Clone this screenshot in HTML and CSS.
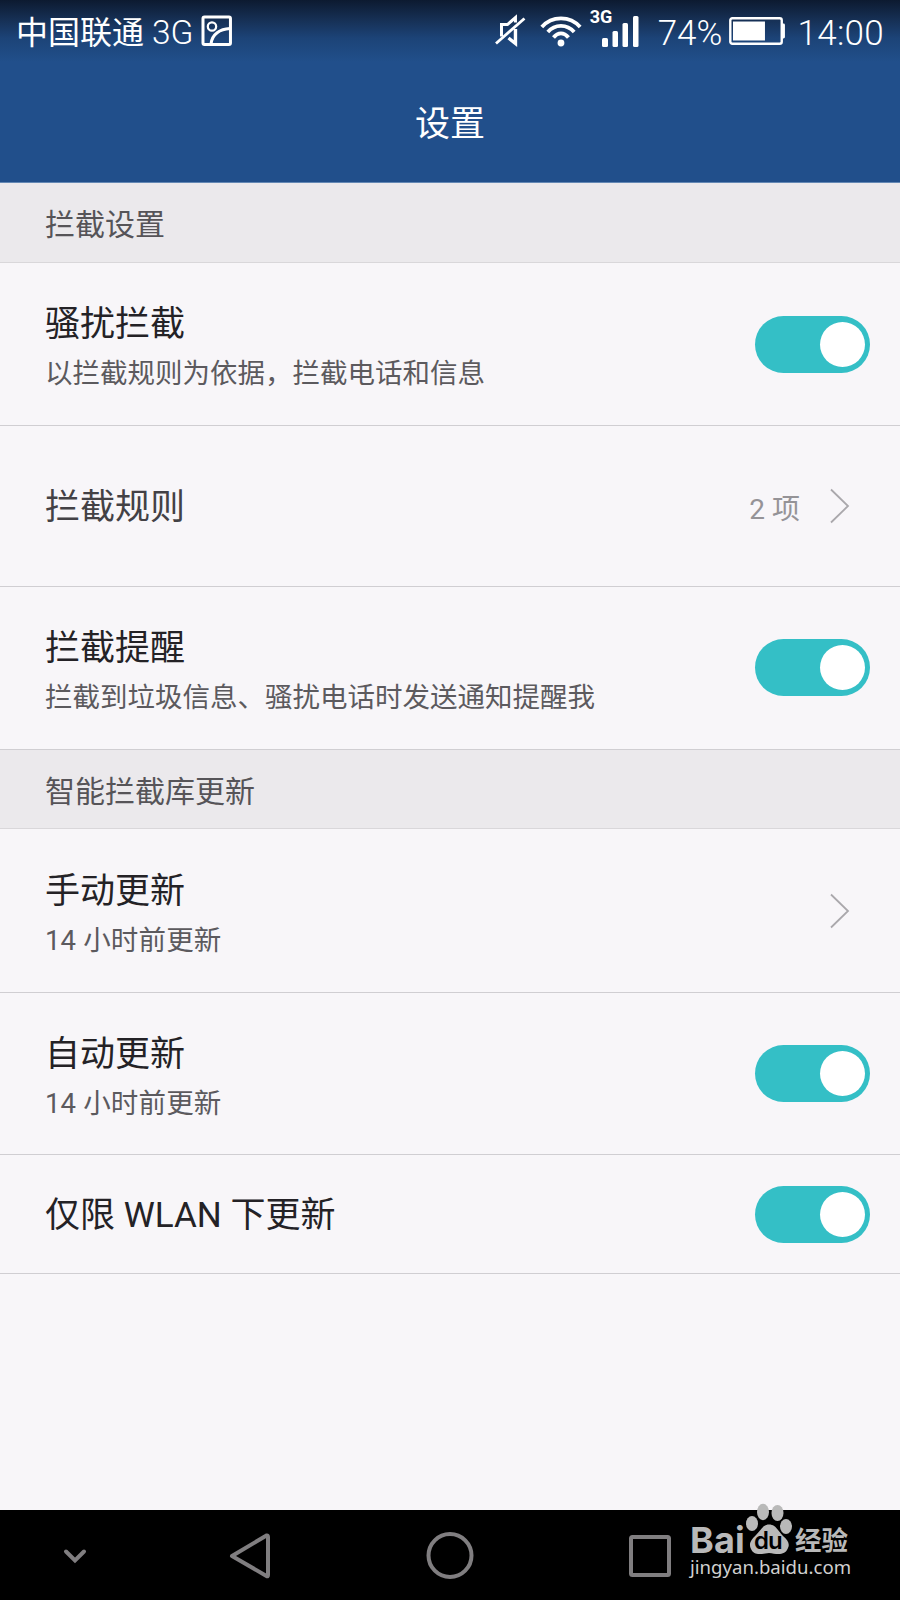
FILE: index.html
```
<!DOCTYPE html>
<html lang="zh-CN">
<head>
<meta charset="utf-8">
<title>设置</title>
<link rel="stylesheet" href="styles.css">
</head>
<body>
<div class="screen">
  <header class="header">
    <div class="status">
      <span class="carrier">中国联通 <span class="gen">3G</span></span>
      <svg class="picture" width="32" height="32" viewBox="0 0 32 32" fill="none" stroke="#fff"><rect x="2" y="2" width="27.5" height="27.5" rx="1.5" stroke-width="3"/><circle cx="11" cy="11.500" r="4.200" stroke-width="2.200"/><path d="M10 29C11 19 19 14 29 13.500" stroke-width="3"/></svg>
      <svg class="mute" width="32" height="34" viewBox="0 0 32 34" fill="none" stroke="#fff"><path d="M1 29.500L29.500 4.500" stroke-width="2.800"/><path d="M6.500 22.500V10.500H12.500L20.500 3.500V8.500" stroke-width="3"/><path d="M20.500 15V29.500L13.500 24" stroke-width="3.400"/></svg>
      <svg class="wifi" width="42" height="34" viewBox="0 0 42 34" fill="none" stroke="#fff" stroke-width="3.800"><circle cx="21" cy="29" r="3.400" fill="#fff" stroke="none"/><path d="M1.800 13C12 1.500 30 1.500 40.200 13"/><path d="M7.800 18C15 9.800 27 9.800 34.200 18"/><path d="M13.500 23.500C18 18 24 18 28.500 23.500"/></svg>
      <div class="cell">
        <span class="net">3G</span>
        <svg width="50" height="48" viewBox="0 0 50 48" fill="#fff"><rect x="12" y="38" width="6" height="9" rx="1.500"/><rect x="22.500" y="31" width="5.500" height="16" rx="1.500"/><rect x="32.500" y="23" width="5.500" height="24" rx="1.500"/><rect x="43" y="16" width="5.500" height="31" rx="1.500"/></svg>
      </div>
      <span class="percent">74%</span>
      <svg class="battery" width="57" height="28" viewBox="0 0 57 28"><rect x="1.300" y="1.300" width="51.500" height="25.400" rx="2" fill="none" stroke="#fff" stroke-width="2.400"/><rect x="4" y="4.500" width="32" height="19" fill="#fff"/><path d="M53 6.500H54.500Q56 6.500 56 8V20Q56 21.500 54.500 21.500H53Z" fill="#fff"/></svg>
      <span class="clock">14:00</span>
    </div>
    <h1 class="heading">设置</h1>
  </header>
  <main class="content">
    <h2 class="section first">拦截设置</h2>
    <div class="row">
      <div class="label"><div class="title">骚扰拦截</div><div class="sub">以拦截规则为依据，拦截电话和信息</div></div>
      <div class="toggle"><div class="knob"></div></div>
    </div>
    <div class="row short">
      <div class="label only"><div class="title soft">拦截规则</div></div>
      <span class="count">2 项</span>
      <svg class="arrow" width="22" height="36" viewBox="0 0 22 36"><path d="M2 1.500L19 18L2 34.500"/></svg>
    </div>
    <div class="row alert">
      <div class="label"><div class="title">拦截提醒</div><div class="sub">拦截到垃圾信息、骚扰电话时发送通知提醒我</div></div>
      <div class="toggle"><div class="knob"></div></div>
    </div>
    <h2 class="section">智能拦截库更新</h2>
    <div class="row tall">
      <div class="label"><div class="title">手动更新</div><div class="sub spaced">14 小时前更新</div></div>
      <svg class="arrow" width="22" height="36" viewBox="0 0 22 36"><path d="M2 1.500L19 18L2 34.500"/></svg>
    </div>
    <div class="row auto">
      <div class="label"><div class="title">自动更新</div><div class="sub spaced">14 小时前更新</div></div>
      <div class="toggle"><div class="knob"></div></div>
    </div>
    <div class="row single">
      <div class="label only"><div class="title">仅限 WLAN 下更新</div></div>
      <div class="toggle"><div class="knob"></div></div>
    </div>
  </main>
  <nav class="nav">
    <svg width="150" height="90" viewBox="0 0 150 90"><path d="M66 41.500L75 50.500L84 41.500" stroke-linecap="round"/></svg>
    <svg width="200" height="90" viewBox="150 0 200 90"><path d="M232 46L266.500 25.500Q268 25 268 27V65Q268 67 266.500 66Z" stroke-linejoin="round"/></svg>
    <svg width="200" height="90" viewBox="350 0 200 90"><circle cx="450" cy="45.500" r="21.500"/></svg>
    <svg width="200" height="90" viewBox="550 0 200 90"><rect x="631" y="27" width="38" height="38" rx="1.500"/></svg>
  </nav>
  <div class="watermark">
    <div class="brand">
      <span class="bai">Bai</span>
      <span class="paw">
        <svg width="48" height="53" viewBox="0 0 48 53"><ellipse cx="7" cy="21.500" rx="6" ry="7.500"/><ellipse cx="18" cy="10" rx="6" ry="8.300"/><ellipse cx="32.500" cy="11" rx="6" ry="8"/><ellipse cx="41" cy="24.500" rx="6" ry="7.500"/><path d="M24 22.500C31 22.500 33 29 38 34C43 38 45 42 43 46C40 54 32 52 24 51C16 52 9 54 6 47C3 41 7 37 11 33C16 28 18 22.500 24 22.500Z"/></svg>
        <span class="du">du</span>
      </span>
      <span class="exp">经验</span>
    </div>
    <div class="site">jingyan.baidu.com</div>
  </div>
</div>
</body>
</html>
```
FILE: styles.css
```
* { box-sizing: border-box; }
body { margin: 0; font-family: Roboto, "Noto Sans CJK SC", sans-serif; }
.screen { position: relative; width: 900px; height: 1600px; background: #f8f6f9; display: flex; flex-direction: column; overflow: hidden; }
.header { height: 183px; background: linear-gradient(#0c1a30 0, #163055 20px, #1c4377 38px, #214f8b 62px); color: #fff; border-bottom: 1px solid #6488b4; }
.status { display: flex; align-items: center; height: 62px; padding: 0 16px; font-size: 35px; font-weight: 300; white-space: nowrap; }
.carrier { font-size: 32px; line-height: 48px; width: 185px; margin-top: 4px; font-weight: 400; }
.gen { font-size: 33.5px; font-weight: 300; }
.mute { margin-left: 262px; }
.wifi { margin-left: 13px; }
.cell { position: relative; height: 48px; width: 50px; margin-left: 8px; margin-top: -14px; }
.net { position: absolute; left: 0; top: 7px; font-size: 18px; line-height: 20px; font-weight: 700; }
.percent { margin-left: 18px; width: 71px; margin-top: 5px; }
.clock { margin-left: 12px; margin-top: 5px; letter-spacing: 0.3px; }
.heading { margin: 36px 0 0; font-size: 35px; line-height: 54px; font-weight: 400; text-align: center; }
.content { flex: 1; }
.section { margin: 0; height: 79px; padding-left: 45px; font-size: 30px; line-height: 84px; font-weight: 400; color: #565458; background: #ebe9ec; border-bottom: 1px solid #d9d7da; }
.section.first { height: 80px; line-height: 84px; }
.row { display: flex; align-items: center; height: 163px; padding: 0 30px 0 45px; border-bottom: 1px solid #d0ced2; }
.row.short { height: 161px; }
.row.alert { padding-bottom: 1px; }
.row.tall { height: 164px; }
.row.auto { height: 162px; }
.row.single { height: 119px; }
.label { flex: 1; padding-top: 10px; }
.label.only { padding-top: 4px; }
.title { font-size: 35px; line-height: 50px; color: #242226; }
.title.soft { color: #434145; }
.sub { font-size: 27.5px; line-height: 48px; color: #5c5a5e; }
.sub.spaced { letter-spacing: 0.15px; }
.toggle { display: flex; justify-content: flex-end; width: 115px; height: 57px; padding: 6px 5px; border-radius: 29px; background: #34bfc6; }
.knob { width: 45px; height: 45px; border-radius: 50%; background: #fff; }
.count { font-size: 28px; color: #959397; margin-right: 29px; padding-top: 1px; }
.arrow { margin-right: 19px; fill: none; stroke: #aaa8ac; stroke-width: 1.8; }
.nav { display: flex; height: 90px; background: #000; }
.nav svg { fill: none; stroke: #807e80; stroke-width: 4; }
.watermark { position: absolute; left: 690px; top: 1502px; color: #b9b9b9; }
.brand { display: flex; height: 54px; }
.bai { width: 55px; margin-top: 22px; font: 700 36px/32px Inter, sans-serif; letter-spacing: 0.2px; }
.paw { position: relative; width: 48px; margin-right: 2px; fill: #b9b9b9; }
.du { position: absolute; left: 9px; top: 24px; color: #000; font: 600 24px/30px Inter, sans-serif; letter-spacing: -1px; }
.exp { margin-top: 23px; font: 700 26.5px/28px "Noto Sans CJK SC", sans-serif; }
.site { font: 18.6px/22px "Noto Sans", sans-serif; color: #d0d0d0; }
```
